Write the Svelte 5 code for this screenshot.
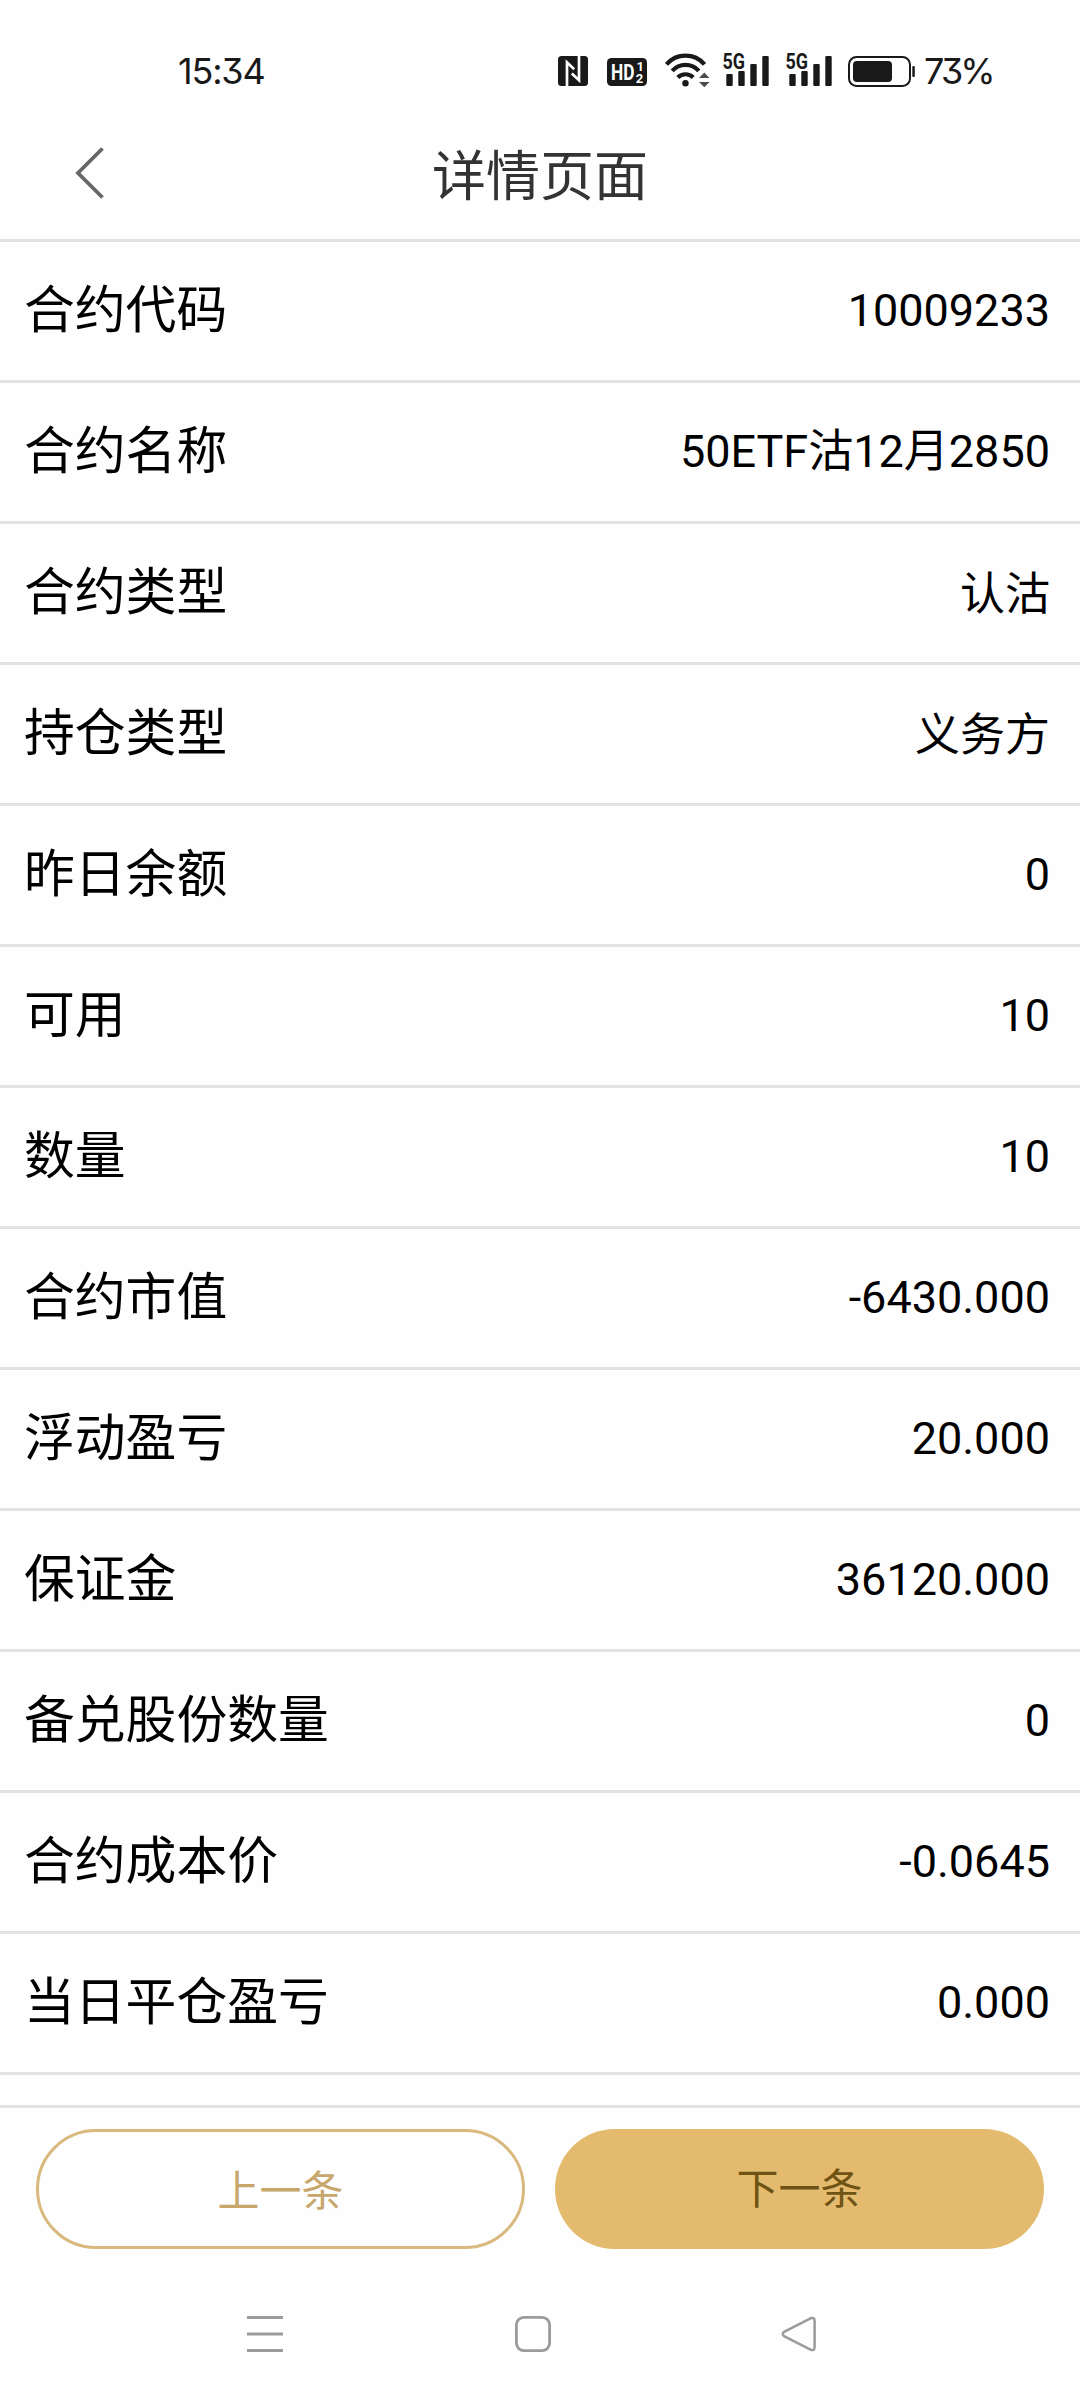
<script>
  const rows = [
    ['合约代码', '10009233'],
    ['合约名称', '50ETF沽12月2850'],
    ['合约类型', '认沽'],
    ['持仓类型', '义务方'],
    ['昨日余额', '0'],
    ['可用', '10'],
    ['数量', '10'],
    ['合约市值', '-6430.000'],
    ['浮动盈亏', '20.000'],
    ['保证金', '36120.000'],
    ['备兑股份数量', '0'],
    ['合约成本价', '-0.0645'],
    ['当日平仓盈亏', '0.000'],
  ];

  const isHan = (text) => /^\p{Script=Han}+$/u.test(text);
</script>

{#snippet signal()}
  <svg class="signal" width="47" height="40" viewBox="0 -6 47 40">
    <g fill="#191919">
      <rect x="3.3" y="21" width="6.4" height="12" rx="1" />
      <rect x="15.3" y="18" width="6.4" height="15" rx="1" />
      <rect x="27.3" y="11" width="6.4" height="22" rx="1" />
      <rect x="39.3" y="3" width="6.4" height="30" rx="1" />
    </g>
    <text class="badge" x="-0.5" y="15.9" textLength="22.5" lengthAdjust="spacingAndGlyphs">5G</text>
  </svg>
{/snippet}

<div class="screen">
  <header class="status">
    <span class="time">15:34</span>
    <div class="icons">
      <svg class="nfc" width="30" height="30" viewBox="0 0 30 30">
        <rect width="30" height="30" rx="3.5" fill="#191919" />
        <path d="M9 30V6.3L16.2 13.2M21 0V24.2L13.8 17.4" fill="none" stroke="#fefefe" stroke-width="2.7" />
      </svg>
      <svg class="hd" width="40" height="28" viewBox="0 0 40 28">
        <rect width="40" height="28" rx="4.5" fill="#191919" />
        <text class="hd-text" x="4" y="22" textLength="23.5" lengthAdjust="spacingAndGlyphs">HD</text>
        <text class="hd-num" x="29.5" y="12.6">1</text>
        <text class="hd-num" x="28.8" y="25.3">2</text>
      </svg>
      <svg class="wifi" width="45" height="35" viewBox="0 0 45 35">
        <g fill="none" stroke="#191919" stroke-width="4.2">
          <path d="M1.5 11.4a25 25 0 0 1 38 0" />
          <path d="M7.2 17.8a18 18 0 0 1 26.6 0" />
          <path d="M12.8 24.4a11 11 0 0 1 15.4 0" />
        </g>
        <circle cx="20.5" cy="30.2" r="3.2" fill="#191919" />
        <path d="M34 25h10.5l-5.2-5.5zM34 29h10.5l-5.2 5.2z" fill="#4c4c4c" />
      </svg>
      {@render signal()}
      {@render signal()}
      <svg class="battery" width="67" height="31" viewBox="0 0 67 31">
        <rect x="1" y="1" width="61" height="29" rx="7.5" fill="none" stroke="#191919" stroke-width="2" />
        <rect x="5" y="5" width="39" height="21" rx="4" fill="#191919" />
        <rect x="64.3" y="10" width="2.5" height="11" rx="1" fill="#191919" />
      </svg>
      <span class="percent">73%</span>
    </div>
  </header>

  <nav class="titlebar">
    <svg class="back" width="32" height="52" viewBox="0 0 32 52">
      <path d="M28.5 1.5L4 26l24.5 24.5" fill="none" stroke="#666" stroke-width="3.8" />
    </svg>
    <h1>详情页面</h1>
  </nav>

  <main class="list">
    {#each rows as [label, value]}
      <div class="row">
        <span class="label">{label}</span>
        <span class="value" class:han={isHan(value)}>{value}</span>
      </div>
    {/each}
  </main>

  <div class="actions">
    <button class="prev">上一条</button>
    <button class="next">下一条</button>
  </div>

  <footer class="navkeys">
    <svg width="36" height="36" viewBox="0 0 36 36">
      <path d="M0 1.5h36M0 18h36M0 34.5h36" stroke="#9b9b9b" stroke-width="2.8" />
    </svg>
    <svg class="home" width="36" height="36" viewBox="0 0 36 36">
      <rect x="1.4" y="1.4" width="33.2" height="33.2" rx="7.5" fill="none" stroke="#9b9b9b" stroke-width="2.8" />
    </svg>
    <svg width="36" height="36" viewBox="0 0 36 36">
      <path d="M29.5 2.3L3 15.8Q0.6 18 3 20.2L29.5 33.7Q33.4 35 33.6 31.5V4.5Q33.4 1 29.5 2.3Z" fill="none" stroke="#9b9b9b" stroke-width="2.5" stroke-linejoin="round" />
    </svg>
  </footer>
</div>

<style>
  :global(body) {
    background: #fefefe;
  }
  .screen {
    box-sizing: border-box;
    width: 1080px;
    height: 2400px;
    display: flex;
    flex-direction: column;
    overflow: hidden;
    background: #fefefe;
    color: #000;
    font-family: "Noto Sans CJK SC", sans-serif;
  }
  svg {
    display: block;
    flex: none;
    overflow: visible;
  }
  .status {
    box-sizing: border-box;
    flex: none;
    height: 110px;
    padding: 32px 87px 0 178px;
    display: flex;
    justify-content: space-between;
    align-items: flex-start;
    color: #191919;
  }
  .time,
  .percent {
    font-family: Inter, Roboto, sans-serif;
    font-feature-settings: "cv09";
    font-size: 36px;
    line-height: 78px;
    height: 78px;
    letter-spacing: -1.2px;
    white-space: nowrap;
  }
  .icons {
    display: flex;
    align-items: flex-start;
  }
  .nfc {
    margin-top: 24px;
  }
  .hd {
    margin: 26px 0 0 19px;
  }
  .wifi {
    margin: 21px 0 0 18px;
  }
  .signal {
    margin: 15px 0 0 13px;
  }
  .signal + .signal {
    margin-left: 16px;
  }
  .battery {
    margin: 24px 0 0 15px;
  }
  .percent {
    width: 69px;
    margin-left: 9px;
    letter-spacing: -2.9px;
  }
  .badge {
    font: 700 21.5px Roboto, sans-serif;
    fill: #191919;
    stroke: #fefefe;
    stroke-width: 2.5px;
    paint-order: stroke;
  }
  .hd-text {
    font: 700 22px Roboto, sans-serif;
    fill: #fefefe;
  }
  .hd-num {
    font: 700 13px Roboto, sans-serif;
    fill: #fefefe;
  }
  .titlebar {
    box-sizing: border-box;
    flex: none;
    height: 132px;
    padding: 0 74px;
    border-bottom: 3px solid #e3e3e3;
    display: grid;
    grid-template-columns: 32px 1fr 32px;
    align-items: start;
  }
  .back {
    margin-top: 37px;
  }
  h1 {
    margin: 0;
    height: 129px;
    text-align: center;
    font-size: 54px;
    font-weight: 400;
    line-height: 126px;
    color: #333;
  }
  .list {
    flex: none;
    height: 1863px;
    overflow: hidden;
  }
  .row {
    box-sizing: border-box;
    height: 141px;
    padding: 0 30px 0 24px;
    border-bottom: 3px solid #e3e3e3;
    display: flex;
    justify-content: space-between;
  }
  .label {
    font-size: 50.8px;
    line-height: 129px;
  }
  .value {
    font-family: Roboto, "Noto Sans CJK SC", sans-serif;
    font-size: 45px;
    line-height: 138px;
  }
  .han {
    line-height: 141px;
  }
  .actions {
    box-sizing: border-box;
    flex: none;
    height: 168px;
    padding: 21px 36px 0;
    border-top: 3px solid #e3e3e3;
    display: grid;
    grid-template-columns: 1fr 1fr;
    gap: 30px;
  }
  button {
    box-sizing: border-box;
    height: 120px;
    margin: 0;
    padding: 0;
    border: 0;
    border-radius: 60px;
    font-family: inherit;
    font-size: 42px;
    line-height: 112px;
  }
  .prev {
    padding-bottom: 2px;
    border: 3px solid #d9b97e;
    background: transparent;
    color: #c7a76c;
  }
  .next {
    padding-bottom: 7px;
    background: #e3ba6e;
    color: #6f5314;
  }
  .navkeys {
    flex: none;
    padding: 43px 263px 0 247px;
    display: flex;
    justify-content: space-between;
  }
  .home {
    margin-left: 2px;
  }
</style>
